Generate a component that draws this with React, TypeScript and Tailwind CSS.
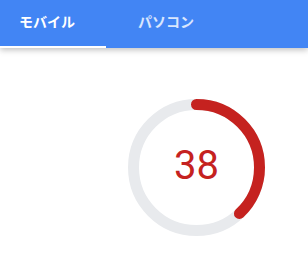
const SCORE = 38

function Gauge({ value }: { value: number }) {
  const r = 63
  const c = 2 * Math.PI * r
  return (
    <div className="relative w-[137px] h-[137px]">
      <svg width="137" height="137" viewBox="0 0 137 137" className="-rotate-90">
        <circle cx="68.5" cy="68.5" r={r} fill="none" stroke="#e8eaed" strokeWidth="11" />
        <circle
          cx="68.5"
          cy="68.5"
          r={r}
          fill="none"
          stroke="#c5221f"
          strokeWidth="11"
          strokeLinecap="round"
          strokeDasharray={`${(c * value) / 100} ${c}`}
        />
      </svg>
      <div className="absolute inset-0 flex items-center justify-center font-['Roboto',sans-serif] text-[40px] text-[#c5221f] leading-none pb-[3px]">
        {value}
      </div>
    </div>
  )
}

export default function App() {
  return (
    <div className="w-[308px] h-[254px] bg-white overflow-hidden font-['Noto_Sans_CJK_JP','Noto_Sans',sans-serif]">
      <div className="relative h-[48px] bg-[#4285f4] shadow-[0_2px_6px_rgba(0,0,0,0.25)] flex">
        <div className="w-[120px] pl-[19px] pt-[10px] text-[14px] font-bold text-white leading-[22px]">モバイル</div>
        <div className="pl-[18px] pt-[10px] text-[14px] font-bold text-white/80 leading-[22px]">パソコン</div>
        <div className="absolute left-0 bottom-0 w-[106px] h-[2px] bg-white" />
      </div>
      <div className="pt-[51px] pl-[128px]">
        <Gauge value={SCORE} />
      </div>
    </div>
  )
}
